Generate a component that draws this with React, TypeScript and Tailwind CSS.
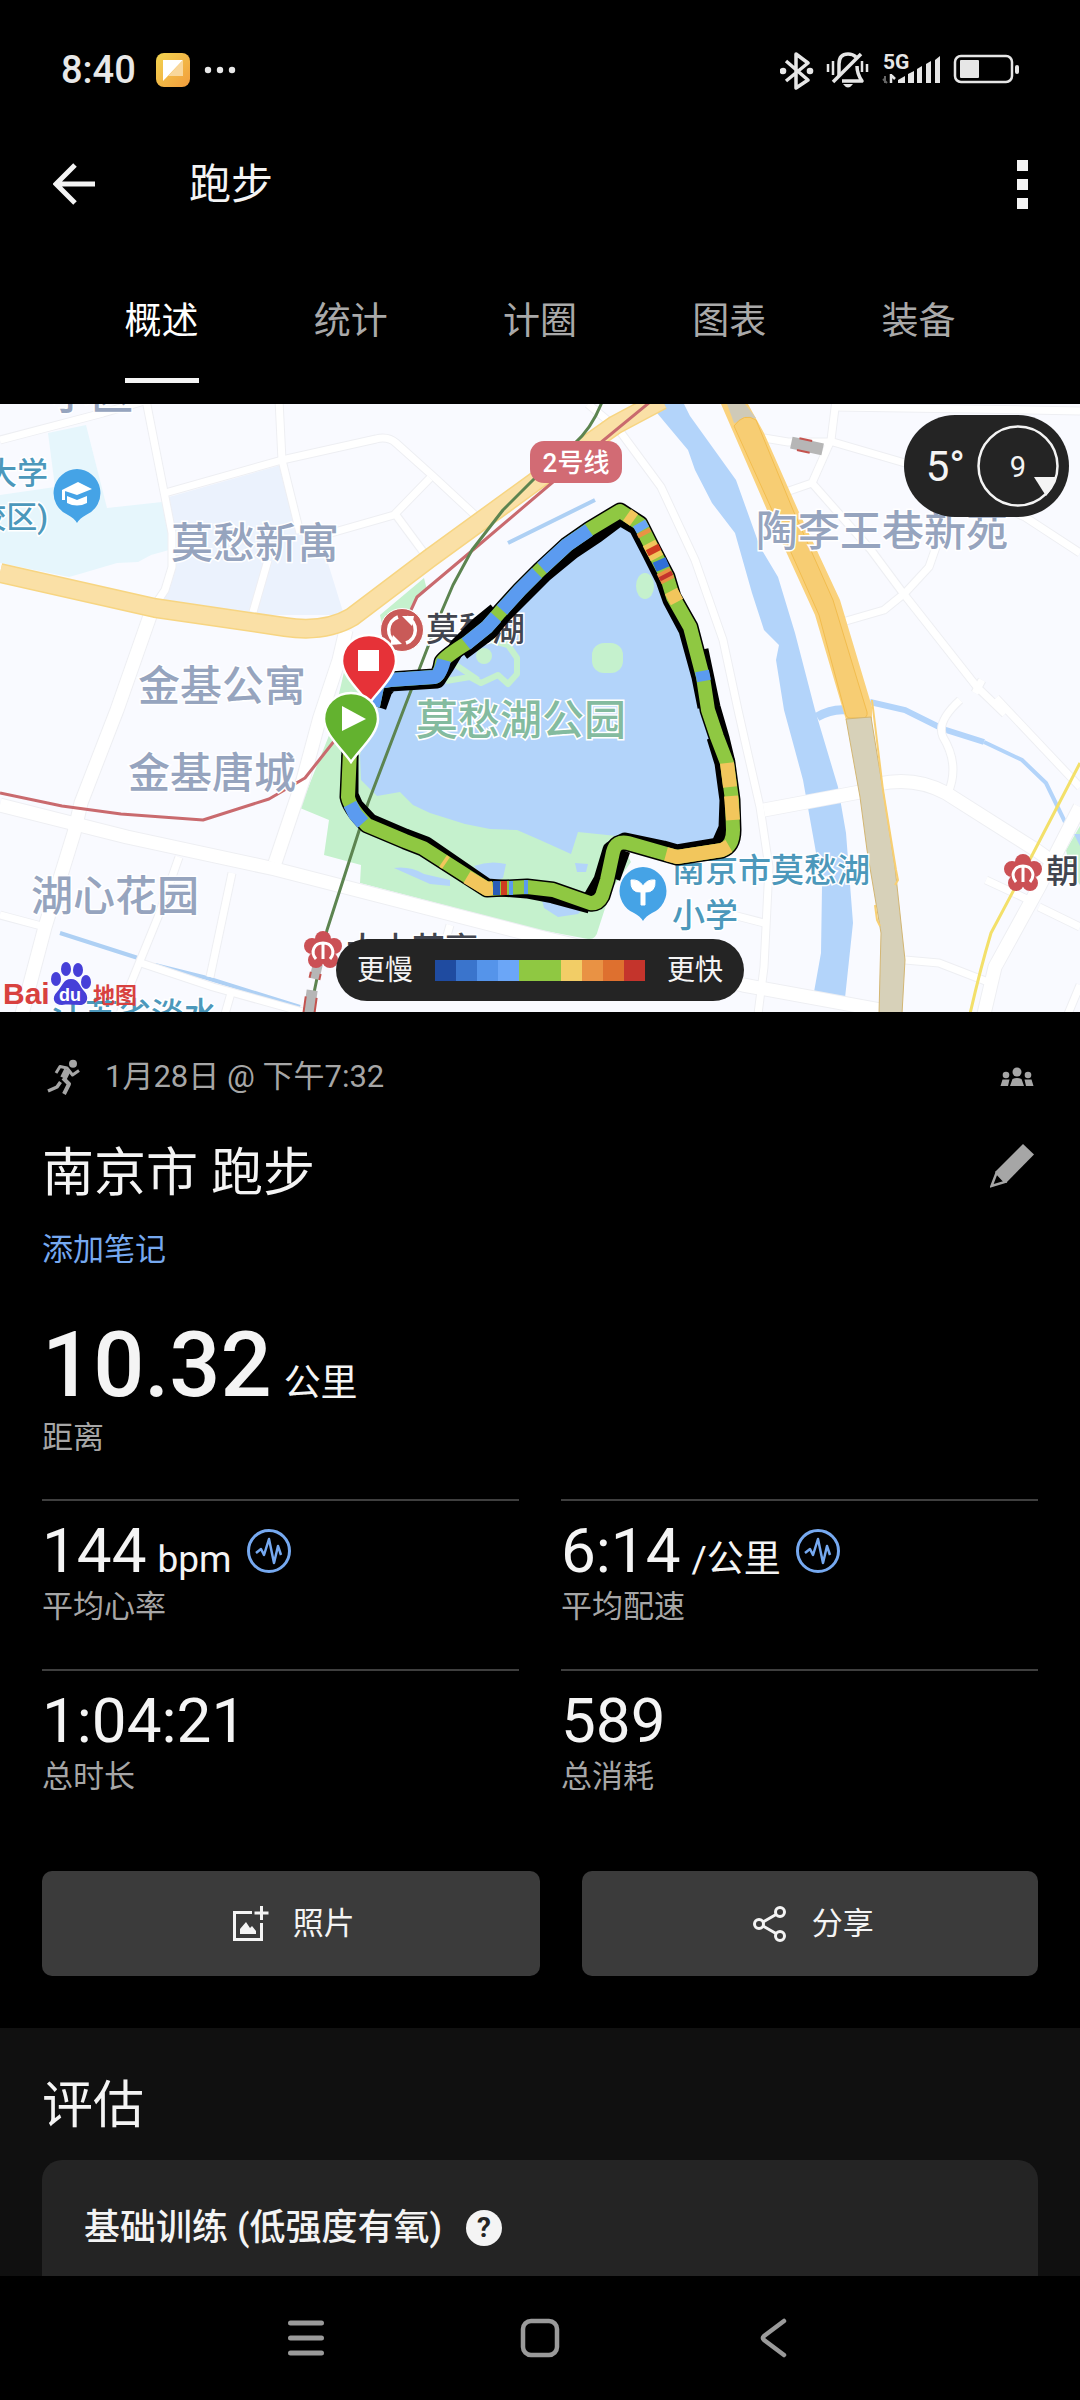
import type { ReactNode } from 'react';

const tabs = ['概述', '统计', '计圈', '图表', '装备'];

const paceScale = [
  'bg-[#1f4ba0]',
  'bg-[#3a74cc]',
  'bg-[#5594ea]',
  'bg-[#6ba6f7]',
  'bg-[#8fc842]',
  'bg-[#8fc842]',
  'bg-[#f2cd66]',
  'bg-[#e99244]',
  'bg-[#de702f]',
  'bg-[#c4342c]',
];

const stats = [
  { label: '平均心率', value: '144', unit: 'bpm', chart: true },
  { label: '平均配速', value: '6:14', unit: '/公里', chart: true },
  { label: '总时长', value: '1:04:21', unit: '', chart: false },
  { label: '总消耗', value: '589', unit: '', chart: false },
];

const minorRoads = [
  'M0 440 L103 413 L148 400',
  'M146 400 L165 497 L172 533 L172 567 L165 590 L157 602',
  'M165 493 L282 460 L376 439 Q388 436 396 443 L434 477 L477 517',
  'M279 400 L282 460 L300 533',
  'M430 478 L394 515 L331 533 M268 560 L253 612',
  'M396 515 L427 557',
  'M179 857 L158 917 L131 983 L120 1014',
  'M232 873 L210 977',
  'M0 915 L45 927',
  'M141 963 L213 987 L310 1014',
  'M231 993 L225 1014',
  'M588 404 L619 430 L661 487 L695 560 L723 640 L738 710 L747 750 L760 807 L769 867 L764 967 L758 1014',
  'M764 438 L788 442 L833 442 L905 463 L1025 517 L1080 553',
  'M836 400 L831 440 L812 483 L786 492',
  'M836 407 L970 409 L1080 411',
  'M812 483 L871 550 L903 593 L977 687 L1005 714',
  'M846 621 L884 610 L905 593 L929 567 L936 547',
  'M975 693 L982 680',
  'M960 700 Q936 722 943 737 Q960 765 948 793',
  'M996 698 L1080 787',
  'M905 960 L939 963 L988 982',
  'M986 880 L1029 900',
  'M1039 907 L1080 927',
  'M733 915 L764 923',
  'M1080 985 L1068 1014',
  'M450 925 L440 960',
  'M25 1000 L20 1014',
];

const majorRoads = [
  'M151 613 L117 710 L81 803 L74 833 L45 927 L22 1014',
  'M346 630 L339 660 L320 717 L303 780 L275 863',
  'M0 805 L127 837 L275 869 L540 937 L743 985 L880 1010',
  'M764 810 L860 792 M878 784 Q915 776 946 793 L1036 850 L1050 860',
  'M1080 807 L1039 887 L995 967 L984 1014',
];

const track =
  'M373 706 L378 682 L390 680 L434 677 Q440 676 442 662 Q446 656 467 643 L487 627 L500 612 L520 590 L540 570 L567 545 L590 529 L620 511 L640 524 L653 550 L667 577 L673 597 L690 627 L703 677 L708 710 L717 737 L727 763 L732 800 L733 830 Q733 846 722 850 L677 857 L663 853 L628 843 Q616 840 613 852 L607 880 L602 896 Q598 904 590 903 L553 890 L527 887 L487 889 L423 848 L405 841 L367 825 Q350 808 348 797 L350 750';

// dark edge that is thicker on the lake side of the track
const trackShade = [
  'M378 707 L384 690 L390 683 L437 680 L446 666 L458 646 L480 624 L496 611 M462 652 L490 631 L503 615 L524 594 L544 574 L572 551 L596 535 L620 517 L637 527 L650 552 L664 580 L671 600 L687 630 L700 677 L706 707',
  'M700 650 L712 707 L721 738 L727 763',
  'M715 737 L723 763 L728 800 L727 828 L719 846 L677 853 L663 849 L625 841 L611 850 L602 880 L591 899',
  'M622 850 L612 878 M590 905 L553 895 L527 890 L487 887 L426 845 L405 837 L370 822 L355 806 L350 795 L350 755',
];

const trackColors = [
  { color: '#5b9bf0', d: 'M373 706 L378 682 L390 680 L434 677 Q440 676 444 660' },
  { color: '#5b9bf0', d: 'M466 644 L487 627 L496 617' },
  { color: '#5b9bf0', d: 'M502 610 L520 590 L537 573' },
  { color: '#5b9bf0', d: 'M542 568 L567 545 L589 530' },
  { color: '#f2c65c', d: 'M627 515 L634 520' },
  { color: '#6ba6f7', d: 'M639 523 L643 530' },
  { color: '#e99244', d: 'M643 531 L645 535' },
  { color: '#f2c65c', d: 'M649 543 L657 558' },
  { color: '#cf3d20', d: 'M652 547 L655 553' },
  { color: '#2f6fd8', d: 'M659 560 L663 569' },
  { color: '#e99244', d: 'M663 571 L668 581' },
  { color: '#c4342c', d: 'M665 574 L667 578' },
  { color: '#f2c65c', d: 'M671 591 L677 602' },
  { color: '#5b9bf0', d: 'M702 671 L704 681' },
  { color: '#f2c65c', d: 'M727 763 L730 787' },
  { color: '#f2c65c', d: 'M731 796 L733 820' },
  { color: '#f2c65c', d: 'M729 846 L722 850 L677 857 L666 854' },
  { color: '#f2c65c', d: 'M446 863 L443 861' },
  { color: '#f2c65c', d: 'M467 877 L487 889 L493 888' },
  { color: '#2a5db8', d: 'M493 888 L500 888' },
  { color: '#cf3d20', d: 'M501 888 L507 888' },
  { color: '#5b9bf0', d: 'M509 888 L513 888' },
  { color: '#5b9bf0', d: 'M524 887 L528 887' },
  { color: '#5b9bf0', d: 'M350 804 L355 814 L363 823' },
];

function MetroStation({ x, y }: { x: number; y: number }) {
  return (
    <g transform={`translate(${x} ${y})`}>
      <g fill="#cb5055">
        <circle cx="0" cy="-11" r="8" />
        <circle cx="11" cy="-4" r="8" />
        <circle cx="7" cy="10" r="8" />
        <circle cx="-7" cy="10" r="8" />
        <circle cx="-11" cy="-4" r="8" />
        <circle r="10" />
      </g>
      <path
        d="M-7 9 C-13 2 -9 -7 0 -7 C9 -7 13 2 7 9 M0 -7 V9"
        fill="none"
        stroke="#fff"
        strokeWidth="3"
      />
    </g>
  );
}

function PlacePin({ x, y, children }: { x: number; y: number; children: ReactNode }) {
  return (
    <g transform={`translate(${x} ${y})`}>
      <path
        d="M0 -24 A24 24 0 0 1 9 22 Q3 25 0 30 Q-3 25 -9 22 A24 24 0 0 1 0 -24 Z"
        fill="#45a3e6"
      />
      {children}
    </g>
  );
}

function TrackPin({ x, y, color, children }: { x: number; y: number; color: string; children: ReactNode }) {
  return (
    <g transform={`translate(${x} ${y})`}>
      <path
        d="M0 -26 C15 -26 27 -15 27 0 C27 15 9 30 0 43 C-9 30 -27 15 -27 0 C-27 -15 -15 -26 0 -26 Z"
        fill={color}
        stroke="#fff"
        strokeWidth="2.5"
      />
      {children}
    </g>
  );
}

function RouteMap() {
  return (
    <svg
      viewBox="0 404 1080 608"
      className="block w-full bg-[#f9faff] font-['Roboto','Noto_Sans_CJK_SC',sans-serif]"
      role="img"
      aria-label="路线地图"
    >
      {/* districts */}
      <path d="M169 497 L281 465 L300 533 L327 560 L344 615 L250 615 L160 602 L174 560 L172 523 Z" fill="#ebf2fd" />
      <path
        d="M48 433 L86 425 L107 508 L162 502 L170 533 L169 550 L151 555 L138 562 L117 563 L83 573 L69 577 L0 563 L0 495 L55 487 Z"
        fill="#e6f6fc"
      />

      {/* park and lake */}
      <path
        d="M330 733 L300 808 L329 820 L324 855 L361 865 L360 883 L540 930 L588 939 Q596 940 598 930 L611 890 L631 862 L617 835 L560 780 L400 700 L376 676 L344 672 Z"
        fill="#c5f1cd"
      />
      <path d="M380 615 L424 578 L427 590 L414 602 L405 640 L385 640 Z" fill="#c5f1cd" />
      <path
        d="M376 690 L390 680 L436 676 L545 566 L618 515 L640 525 L690 630 L707 725 L726 770 L730 830 L715 848 L680 852 L617 836 L578 832 L571 854 L540 840 L517 830 L490 829 L465 824 L430 813 L413 805 L400 792 L377 796 L361 780 L360 755 Z"
        fill="#b3d4fa"
      />
      <path
        d="M394 868 Q410 866 424 874 L450 880 L450 886 L430 884 Z M474 866 Q490 860 506 864 L503 878 L488 884 Z M540 892 L574 906 L584 908 L578 914 L558 917 L544 908 Z M575 863 L588 864 L586 872 L577 872 Z"
        fill="#b3d4fa"
      />
      <ellipse cx="645" cy="586" rx="9" ry="13" fill="#c5f1cd" />
      <rect x="592" y="643" width="31" height="30" rx="12" fill="#c5f1cd" />
      <path
        d="M446 681 L470 677 L481 683 L498 675 L508 684 L517 674 L517 658 L508 645 L490 640 M456 665 L478 680"
        fill="none"
        stroke="#c5f1cd"
        strokeWidth="6"
        strokeLinejoin="round"
      />
      <circle cx="484" cy="656" r="8" fill="#c5f1cd" />
      <path d="M1080 826 L1066 850 L1070 870 L1080 885 Z" fill="#c5f1cd" />
      <path d="M1074 834 L1080 834 V846 Z" fill="#b3d4fa" />

      {/* river and streams */}
      <path
        d="M655 404 L657 413 L688 450 L695 470 L712 503 L735 533 L752 593 L764 630 L779 645 L776 660 L784 710 L793 743 L803 780 L815 847 L822 887 L821 953 L814 992 L845 998 L853 923 L846 833 L838 787 L815 710 L795 633 L778 577 L760 547 L736 480 L690 416 L684 404 Z"
        fill="#b3d4fa"
      />
      <path d="M817 717 Q832 708 848 710" fill="none" stroke="#b3d4fa" strokeWidth="9" />
      <path d="M870 702 L905 710 L943 729 L984 742" fill="none" stroke="#b3d4fa" strokeWidth="6" />
      <path d="M984 742 L1022 760 L1046 783 L1065 822" fill="none" stroke="#b3d4fa" strokeWidth="4" />
      <path d="M508 543 L595 500 M60 933 L138 958 M155 965 L207 978 L300 1007" fill="none" stroke="#aed0f4" strokeWidth="4" />

      {/* roads */}
      <g fill="none" strokeLinejoin="round">
        <g stroke="#eeeff3">
          {minorRoads.map((d) => (
            <path key={d} d={d} strokeWidth="9" />
          ))}
          {majorRoads.map((d) => (
            <path key={d} d={d} strokeWidth="15" />
          ))}
        </g>
        <g stroke="#fff">
          {minorRoads.map((d) => (
            <path key={d} d={d} strokeWidth="7" />
          ))}
          {majorRoads.map((d) => (
            <path key={d} d={d} strokeWidth="13" />
          ))}
        </g>
        <path
          d="M0 573 L155 608 L285 627 Q325 633 352 617 L430 558 L540 478 L615 425 L662 400"
          stroke="#f7d582"
          strokeWidth="20"
        />
        <path
          d="M0 573 L155 608 L285 627 Q325 633 352 617 L430 558 L540 478 L615 425 L662 400"
          stroke="#fae0a6"
          strokeWidth="17"
        />
      </g>
      <path d="M721 404 L748 404 L764 433 L798 510 L840 600 L872 707 L872 720 L846 720 L815 615 L767 510 Z" fill="#fad27d" />
      <path d="M727 404 L745 404 L756 418 L734 423 Z" fill="#cfcab8" />
      <path
        d="M734 426 Q744 412 756 420 L793 510 L833 600 L867 712 Q868 718 862 718 L850 718 Q846 718 845 712 L819 615 L772 510 Z"
        fill="#f7cd73"
        stroke="#f2bd4f"
        strokeWidth="1"
      />
      <path
        d="M846 719 L871 717 L883 790 L895 867 L905 960 L902 1014 L879 1014 L881 933 L867 850 L860 797 Z"
        fill="#d7d1b9"
        stroke="#d3b673"
        strokeWidth="1"
      />
      <path d="M872 700 L883 790 L896 870 L898 880 L895 885 M875 905 L877 920 L880 926" fill="none" stroke="#f8cf72" strokeWidth="2" />

      {/* metro lines */}
      <g fill="none" strokeLinejoin="round">
        <path
          d="M0 793 L62 806 L121 814 L203 820 L269 799 L305 778 L335 740 M411 610 L417 597 L480 544 L560 476 L650 402"
          stroke="#c96a6e"
          strokeWidth="3"
        />
        <path
          d="M602 402 Q592 428 574 444 L535 478 L503 510 L472 550 L453 585 L441 613 L405 706 L368 803 L327 930 L310 1012"
          stroke="#5c8450"
          strokeWidth="3"
        />
        <path d="M1080 763 L1026 867 L991 933 Q980 970 970 1014" stroke="#f3e06a" strokeWidth="3" />
      </g>
      <g transform="rotate(12 807 446)">
        <rect x="791" y="440" width="32" height="12" fill="#b6b6b6" />
        <path d="M798 440 H811 M798 452 H811" stroke="#c4534f" strokeWidth="2" />
      </g>
      <g transform="rotate(13 316 972)">
        <rect x="311" y="964" width="10" height="15" fill="#b6b6b6" />
        <path d="M311 973 V979 M321 973 V979" stroke="#c4534f" strokeWidth="2" />
      </g>
      <g transform="rotate(8 310 1002)">
        <rect x="305" y="990" width="11" height="26" fill="#b6b6b6" />
        <path d="M305 997 V1016 M316 997 V1016" stroke="#c4534f" strokeWidth="2" />
      </g>

      {/* place names */}
      <g fontSize="42" fontWeight="500" fill="#96a4be" stroke="#fff" strokeWidth="3" paintOrder="stroke">
        <text x="49" y="409">小区</text>
        <text x="171" y="558">莫愁新寓</text>
        <text x="138" y="701">金基公寓</text>
        <text x="128" y="788">金基唐城</text>
        <text x="31" y="911">湖心花园</text>
        <text x="756" y="546">陶李王巷新苑</text>
        <text x="416" y="735" fill="#84bb9f">莫愁湖公园</text>
      </g>
      <g fontWeight="500" fill="#4c98bb" stroke="#fff" strokeWidth="3" paintOrder="stroke">
        <text x="48" y="484" fontSize="31" textAnchor="end">大学</text>
        <text x="48" y="528" fontSize="31" textAnchor="end">校区)</text>
        <text x="672" y="882" fontSize="33">南京市莫愁湖</text>
        <text x="672" y="927" fontSize="33">小学</text>
        <text x="52" y="1026" fontSize="33">江苏省淡水</text>
      </g>
      <g fontSize="33" fontWeight="500" fill="#42454f" stroke="#fff" strokeWidth="3" paintOrder="stroke">
        <text x="426" y="641">莫愁湖</text>
        <text x="346" y="961">大士茶亭</text>
        <text x="1046" y="883">朝</text>
      </g>

      <PlacePin x={77} y={493}>
        <path d="M-15 -3 L1 -11 L15 -4 L0 2 Z M-10 3 L0 7 L10 3 V10 Q0 15 -10 10 Z M-15 -3 H-12 V7 H-15 Z" fill="#fff" />
      </PlacePin>
      <PlacePin x={643} y={891}>
        <path
          d="M-2 1 Q-13 2 -12 -11 Q-4 -12 0 -5 Q4 -12 12 -11 Q13 2 2 1 V14 H-2 Z"
          fill="#fff"
          stroke="#fff"
          strokeWidth="1"
        />
      </PlacePin>
      <MetroStation x={323} y={950} />
      <MetroStation x={1023} y={873} />

      <rect x="530" y="441" width="92" height="42" rx="14" fill="#d26b74" />
      <text x="576" y="472" fontSize="26" fontWeight="500" fill="#fff" textAnchor="middle">
        2号线
      </text>

      {/* recorded track, coloured by pace */}
      <g fill="none" strokeLinejoin="round">
        {trackShade.map((d) => (
          <path key={d} d={d} stroke="#000" strokeWidth="17" />
        ))}
        <path d={track} stroke="#000" strokeWidth="17" />
        <path d={track} stroke="#8fc842" strokeWidth="14" />
        {trackColors.map(({ color, d }) => (
          <path key={d} d={d} stroke={color} strokeWidth="14" />
        ))}
      </g>

      <g transform="translate(402 630)" fill="none">
        <circle r="21.5" fill="#c95a58" stroke="#fff" strokeWidth="1" />
        <path d="M-5 13 A14 14 0 0 1 -4 -13 M5 -13 A14 14 0 0 1 4 13" stroke="#fff" strokeWidth="3.5" />
        <path d="M0 -14 L12 -14 L10 -4 Z M0 14 L-12 15 L-9 5 Z" fill="#fff" />
      </g>
      <TrackPin x={369} y={661} color="#e63238">
        <rect x="-11" y="-11" width="21" height="21" fill="#fff" />
      </TrackPin>
      <TrackPin x={351} y={719} color="#63b22f">
        <path d="M-9 -13 L15 0 L-9 12 Z" fill="#fff" />
      </TrackPin>

      {/* map provider logo */}
      <g fill="#d8413f" fontWeight="700">
        <text x="3" y="1004" fontSize="30" className="font-['Liberation_Sans',sans-serif]">Bai</text>
        <text x="93" y="1003" fontSize="22">地图</text>
      </g>
      <g fill="#463fd8">
        <ellipse cx="56" cy="979" rx="5" ry="7" />
        <ellipse cx="66" cy="969" rx="5" ry="7" />
        <ellipse cx="78" cy="970" rx="5" ry="7" />
        <ellipse cx="86" cy="982" rx="5" ry="7" />
        <path d="M71 979 C79 979 80 987 84 991 C90 997 87 1005 80 1005 C74 1005 69 1004 62 1005 C54 1005 51 998 57 992 C62 987 63 979 71 979 Z" />
      </g>
      <text x="70" y="1001" fontSize="18" fontWeight="700" fill="#fff" textAnchor="middle" className="font-['Liberation_Sans',sans-serif]">
        du
      </text>
    </svg>
  );
}

function StatusBar() {
  return (
    <div className="flex h-[140px] items-center justify-between pr-[60px] pl-[61px]">
      <div className="flex items-center text-[#e8e8e8]">
        <span className="text-[38px] leading-[44px] font-medium">8:40</span>
        <svg viewBox="0 0 34 34" className="ml-5 size-[34px]" aria-hidden="true">
          <defs>
            <linearGradient id="note" x1="0" y1="0" x2="1" y2="1">
              <stop offset="0" stopColor="#f2d450" />
              <stop offset="1" stopColor="#f29c3c" />
            </linearGradient>
          </defs>
          <rect width="34" height="34" rx="8" fill="url(#note)" />
          <path d="M7 7 H27 L7 28 Z" fill="#fff" />
          <path d="M27 7 V23 H12 Z" fill="#f9d79b" />
        </svg>
        <svg viewBox="0 0 32 8" className="ml-[14px] h-2 w-8" fill="currentColor" aria-hidden="true">
          <circle cx="4" cy="4" r="3.2" />
          <circle cx="16" cy="4" r="3.2" />
          <circle cx="28" cy="4" r="3.2" />
        </svg>
      </div>
      <svg viewBox="780 50 240 40" className="h-10 w-60 text-[#e6e6e6]" fill="none" stroke="currentColor" aria-label="5G">
        <path d="M786 61 L808 80 L796 88 V54 L808 63 L786 81" strokeWidth="3.5" strokeLinejoin="round" />
        <g fill="currentColor" stroke="none">
          <circle cx="783" cy="71" r="3.3" />
          <circle cx="810" cy="71" r="3.3" />
        </g>
        <path d="M839 76 V64 Q839 54 848 54 Q853 54 856 57 M857 66 Q857 74 862 81 H842" strokeWidth="3.5" strokeLinejoin="round" />
        <path d="M833 82 L861 54" strokeWidth="3.5" />
        <path d="M828 64 V72 M833 61 V75 M867 64 V72 M862 61 V72" strokeWidth="2.5" />
        <path d="M843 84 H853 Q848 91 843 84 Z" fill="currentColor" stroke="none" />
        <text x="883" y="69" fontSize="21" fontWeight="700" fill="currentColor" stroke="none">
          5G
        </text>
        <path d="M885 76 V83 M883 79 L887 83" stroke="#666" strokeWidth="2" />
        <path d="M891 74 V83 M891 75 L895 79" strokeWidth="2.5" />
        <g fill="currentColor" stroke="none">
          <path d="M898 83 V80 L905 76 V83 Z" />
          <path d="M908 83 V74 L914 71 V83 Z" />
          <path d="M917 83 V69 L922 66 V83 Z" />
          <path d="M926 83 V64 L931 61 V83 Z" />
          <path d="M935 83 V60 L940 56 V83 Z" />
          <rect x="960" y="60" width="19" height="18" rx="1" />
          <rect x="1015" y="65" width="4" height="9" rx="2" />
        </g>
        <rect x="955" y="56" width="57" height="26" rx="6" strokeWidth="2.5" />
      </svg>
    </div>
  );
}

function ChartBadge() {
  return (
    <svg viewBox="0 0 44 44" className="size-11" fill="none" stroke="#76a9f0" aria-hidden="true">
      <circle cx="22" cy="22" r="20.5" strokeWidth="3" />
      <path d="M9 24 L14 20 L17 26 L22 10 L27 34 L31 17 L34 26" strokeWidth="2.5" strokeLinejoin="round" />
    </svg>
  );
}

export default function App() {
  return (
    <div className="flex min-h-screen flex-col bg-black font-['Roboto','Noto_Sans_CJK_SC',sans-serif] text-[#f4f4f4]">
      <StatusBar />

      <header className="flex h-[88px] items-center pr-[52px] pl-[53px]">
        <button type="button" aria-label="返回">
          <svg viewBox="0 0 42 42" className="size-[42px]" fill="none" stroke="currentColor" strokeWidth="5">
            <path d="M22 2 L3 21 L22 40 M3 21 H42" />
          </svg>
        </button>
        <h1 className="ml-[94px] pt-0.5 text-[42px] leading-[52px]">跑步</h1>
        <button type="button" aria-label="更多" className="ml-auto flex flex-col gap-2">
          <span className="size-[11px] bg-current" />
          <span className="size-[11px] bg-current" />
          <span className="size-[11px] bg-current" />
        </button>
      </header>

      <nav className="grid grid-cols-5 px-[67px] pt-[68px] pb-[21px]">
        {tabs.map((tab, i) => (
          <div key={tab} className="flex justify-center">
            <button
              type="button"
              className={
                i === 0
                  ? 'border-b-5 border-[#f4f4f4] pb-[30px] text-[37px] leading-[52px] text-white'
                  : 'border-b-5 border-transparent pb-[30px] text-[37px] leading-[52px] text-[#a9a9a9]'
              }
            >
              {tab}
            </button>
          </div>
        ))}
      </nav>

      <figure className="relative">
        <RouteMap />
        <div className="absolute top-[11px] right-[11px] flex items-center gap-3 rounded-full bg-[#242424] py-[10px] pr-2.5 pl-[22px]">
          <span className="pt-0.5 text-[42px] leading-[50px]">5°</span>
          <svg viewBox="0 0 82 82" className="size-[82px]" aria-hidden="true">
            <circle cx="41" cy="41" r="39.5" fill="none" stroke="#f4f4f4" strokeWidth="2.5" />
            <path d="M57 52 L79 52 Q76 63 69 71 Z" fill="#f4f4f4" />
            <text x="41" y="52" fontSize="29" fill="#f4f4f4" textAnchor="middle">
              9
            </text>
          </svg>
        </div>
        <figcaption className="absolute inset-x-0 bottom-[11px] flex justify-center">
          <div className="flex h-[62px] items-center gap-[22px] rounded-full bg-[#242424] px-[21px] text-[28px]">
            <span className="pt-0.5">更慢</span>
            <span className="flex">
              {paceScale.map((color, i) => (
                <span key={i} className={`h-[21px] w-[21px] ${color}`} />
              ))}
            </span>
            <span className="pt-0.5">更快</span>
          </div>
        </figcaption>
      </figure>

      <main className="px-[42px] pt-[44px] pb-[52px]">
        <div className="flex h-[42px] items-center pr-1 text-[#a6a6a6]">
          <svg viewBox="0 0 36 36" className="ml-[5px] size-9" fill="none" stroke="currentColor" strokeLinejoin="round" aria-hidden="true">
            <circle cx="26" cy="4.7" r="4" fill="currentColor" stroke="none" />
            <path d="M9 14 L13 7.5 L20 9 L25.5 16 L32 11.5" strokeWidth="3" />
            <path d="M20.5 11 L16.5 19" strokeWidth="7" />
            <path d="M16 19 L22 25 L17 35" strokeWidth="4" />
            <path d="M13.5 23 L10 28 L1 32" strokeWidth="3.5" />
          </svg>
          <span className="ml-[22px] text-[31px] leading-10">1月28日 @ 下午7:32</span>
          <svg viewBox="0 0 34 20" className="ml-auto h-5 w-[34px]" fill="currentColor" aria-label="公开">
            <circle cx="17" cy="5" r="4.5" />
            <circle cx="6" cy="8" r="3.3" />
            <circle cx="28" cy="8" r="3.3" />
            <path d="M10 19 L12.5 12 Q17 10 21.5 12 L24 19 Z M0.5 19 L2.5 12.5 H9.5 L8 19 Z M33.5 19 L31.5 12.5 H24.5 L26 19 Z" />
          </svg>
        </div>

        <div className="mt-[46px] flex items-start justify-between">
          <h2 className="text-[52px] leading-[60px]">南京市 跑步</h2>
          <button type="button" aria-label="编辑" className="mr-1 text-[#a6a6a6]">
            <svg viewBox="0 0 44 44" className="size-11" fill="currentColor">
              <path d="M33 0 L44 10.5 L16 39 L5 28 Z" />
              <path d="M6.5 29 L15 38 L1.5 42 Z" fill="none" stroke="currentColor" strokeWidth="2.5" />
            </svg>
          </button>
        </div>
        <a href="#note" className="mt-[26px] block w-fit text-[31px] leading-10 text-[#76a9f0]">
          添加笔记
        </a>

        <div className="mt-[52px] flex items-baseline gap-3">
          <span className="text-[90px] leading-[88px] font-medium">10.32</span>
          <span className="text-[37px] leading-[44px]">公里</span>
        </div>
        <p className="mt-2 text-[31px] leading-10 text-[#a6a6a6]">距离</p>

        <div className="mt-[41px] grid grid-cols-2 gap-x-[42px]">
          {stats.map(({ label, value, unit, chart }) => (
            <div key={label} className="border-t-2 border-[#3f3f3f] pt-[18px] pb-[42px]">
              <div className="flex h-16 items-center">
                <div className="flex items-baseline gap-[11px]">
                  <span className="text-[62px] leading-[64px]">{value}</span>
                  {unit && <span className="text-[37px] leading-[44px]">{unit}</span>}
                </div>
                {chart && (
                  <button type="button" aria-label={`${label}图表`} className="ml-[15px]">
                    <ChartBadge />
                  </button>
                )}
              </div>
              <p className="mt-1 text-[31px] leading-10 text-[#a6a6a6]">{label}</p>
            </div>
          ))}
        </div>

        <div className="mt-8 grid grid-cols-[12fr_11fr] gap-[42px] text-[31px] leading-10">
          <button type="button" className="flex h-[105px] items-center justify-center gap-6 rounded-[10px] bg-[#3b3b3b] pl-1.5">
            <svg viewBox="0 0 36 36" className="size-9" fill="none" stroke="currentColor" strokeWidth="3" aria-hidden="true">
              <path d="M19 6.5 H1.5 V33.5 H28.5 V17 M28.5 0 V14 M21.5 7 H35.5" />
              <path d="M7 28 V23 L13 16 L17 22 L19 20 L23 25 V28 Z" fill="currentColor" stroke="none" />
            </svg>
            照片
          </button>
          <button type="button" className="flex h-[105px] items-center justify-center gap-6 rounded-[10px] bg-[#3b3b3b] pl-1.5">
            <svg viewBox="0 0 36 36" className="size-9" fill="none" stroke="currentColor" strokeWidth="3" aria-hidden="true">
              <circle cx="28" cy="6" r="4.5" />
              <circle cx="7" cy="18" r="4.5" />
              <circle cx="28" cy="30" r="4.5" />
              <path d="M24 8.5 L11 16 M24 27.5 L11 20" />
            </svg>
            分享
          </button>
        </div>
      </main>

      <section className="flex flex-1 flex-col bg-[#101010] px-[42px] pt-12">
        <h2 className="text-[51px] leading-[60px]">评估</h2>
        <div className="mt-6 flex-1 rounded-t-[20px] bg-[#242424] px-[42px] pt-[46px] pb-[26px]">
          <div className="flex items-center gap-6">
            <h3 className="text-[36px] leading-[44px] font-medium">基础训练 (低强度有氧)</h3>
            <button
              type="button"
              aria-label="帮助"
              className="flex size-9 items-center justify-center rounded-full bg-[#f4f4f4] text-[28px] leading-9 font-bold text-[#242424]"
            >
              ?
            </button>
          </div>
        </div>
      </section>

      <footer className="sticky bottom-0 flex h-[124px] justify-center bg-black text-[#9a9a9a]">
        <button type="button" aria-label="最近任务" className="flex w-[234px] items-center justify-center">
          <svg viewBox="0 0 40 40" className="size-10" stroke="currentColor" strokeWidth="5" strokeLinecap="round">
            <path d="M4.5 5 H35.5 M4.5 20 H35.5 M4.5 35 H35.5" />
          </svg>
        </button>
        <button type="button" aria-label="主屏幕" className="flex w-[234px] items-center justify-center">
          <svg viewBox="0 0 40 40" className="size-10" fill="none" stroke="currentColor" strokeWidth="4.5">
            <rect x="3" y="3" width="34" height="34" rx="8" />
          </svg>
        </button>
        <button type="button" aria-label="返回上一页" className="flex w-[234px] items-center justify-center">
          <svg viewBox="0 0 40 40" className="size-10" fill="none" stroke="currentColor" strokeWidth="4.5" strokeLinejoin="round" strokeLinecap="round">
            <path d="M30 3 L10 18 Q8 20 10 22 L30 37" />
          </svg>
        </button>
      </footer>
    </div>
  );
}
